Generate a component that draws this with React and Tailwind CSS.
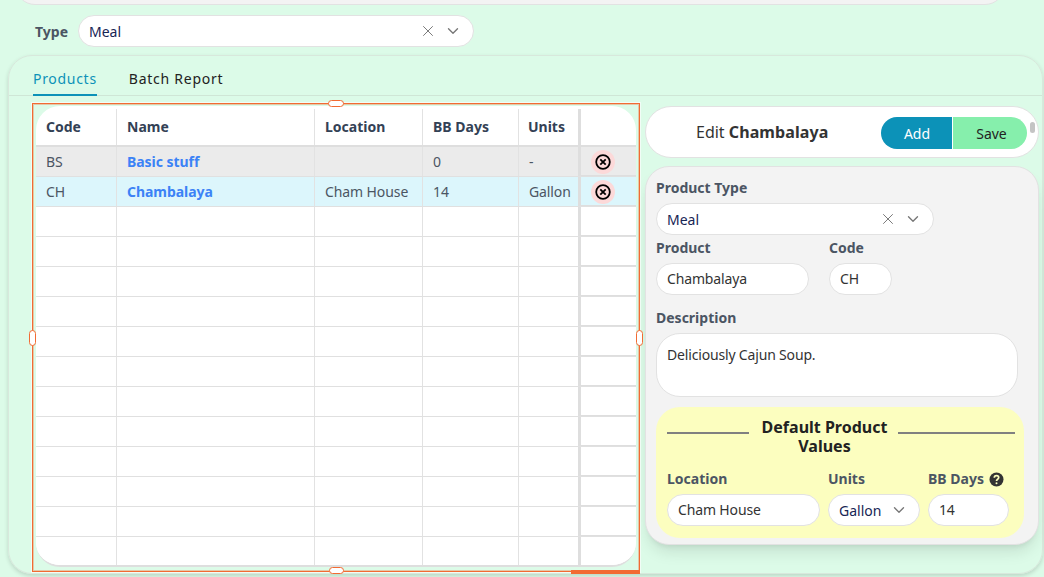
import { X, ChevronDown } from "lucide-react";

const rows = [
  { code: "BS", name: "Basic stuff", location: "", days: "0", units: "-", bg: "bg-[#ebebeb]" },
  { code: "CH", name: "Chambalaya", location: "Cham House", days: "14", units: "Gallon", bg: "bg-[#dcf6fc]" },
  ...Array.from({ length: 12 }, () => ({ code: "", name: "", location: "", days: "", units: "", bg: "bg-white" })),
];

const gridCols = "grid grid-cols-[81px_198px_108px_96px_59px_58px]";

const SelectBox = ({ value, className }) => (
  <div className={`flex items-center rounded-full border border-[#e2e2e2] bg-white pl-[10px] text-sm text-[#172554] ${className}`}>
    <span className="flex-1 pt-[2px]">{value}</span>
    <X className="h-[18px] w-[18px] text-[#777]" strokeWidth={1.3} />
    <ChevronDown className="ml-[7px] mr-[11px] h-[18px] w-[18px] text-[#777]" strokeWidth={1.8} />
  </div>
);

const TextBox = ({ value, className }) => (
  <div className={`flex items-center rounded-full border border-[#e2e2e2] bg-white pl-[10px] text-sm tracking-[-0.15px] text-[#333] ${className}`}>
    {value}
  </div>
);

const Label = ({ children, className = "" }) => (
  <div className={`text-sm font-bold leading-5 text-[#4b5563] ${className}`}>{children}</div>
);

const Handle = ({ className }) => (
  <div className={`absolute rounded-full border border-[#f26b33] bg-white ${className}`} />
);

const RemoveIcon = () => (
  <div className="flex h-6 w-6 items-center justify-center rounded-full bg-[#fcd9d9]">
    <svg width="16" height="16" viewBox="0 0 16 16" fill="none" stroke="#000" strokeWidth="1.8">
      <circle cx="8" cy="8" r="6.8" />
      <path d="M5.3 5.3l5.4 5.4M10.7 5.3l-5.4 5.4" />
    </svg>
  </div>
);

const HelpIcon = () => (
  <svg width="15" height="15" viewBox="0 0 15 15">
    <circle cx="7.5" cy="7.5" r="7" fill="#333" />
    <path d="M5.3 5.8c0-1.3 1-2.1 2.2-2.1s2.2.8 2.2 1.9c0 1.7-2.2 1.6-2.2 3.4" fill="none" stroke="#fcfebf" strokeWidth="1.7" />
    <circle cx="7.5" cy="11.2" r="1" fill="#fcfebf" />
  </svg>
);

const ProductTable = () => (
  <div className="relative h-[469px] w-[608px] shrink-0 border border-[#f26b33] px-[3px] pt-[2px] shadow-[inset_0_0_0_1px_rgba(242,107,51,0.35),0_0_0_1px_rgba(255,255,255,0.6)]">
    <div className="h-[461px] overflow-hidden rounded-[24px] border-b-2 border-[#dedede] bg-white">
      <div className={`${gridCols} h-[41px] border-b-2 border-[#dedede] pt-[3px] text-sm font-bold text-[#334155]`}>
        <div className="flex items-center border-r border-[#e2e2e2] pl-[10px]">Code</div>
        <div className="flex items-center border-r border-[#e2e2e2] pl-[10px]">Name</div>
        <div className="flex items-center border-r border-[#e2e2e2] pl-[10px]">Location</div>
        <div className="flex items-center border-r border-[#e2e2e2] pl-[10px]">BB Days</div>
        <div className="flex items-center pl-[9px]">Units</div>
        <div className="border-l-[3px] border-[#dedede]" />
      </div>
      {rows.map((row, i) => (
        <div key={i} className={`${gridCols} h-[30px] border-b border-[#e0e0e0] text-sm text-[#4b5563] ${row.bg}`}>
          <div className="flex items-center border-r border-[#e2e2e2] pl-[10px]">{row.code}</div>
          <div className="flex items-center border-r border-[#e2e2e2] pl-[10px] font-bold tracking-[-0.05px] text-[#3b82f6]">{row.name}</div>
          <div className="flex items-center border-r border-[#e2e2e2] pl-[10px] tracking-[-0.1px]">{row.location}</div>
          <div className="flex items-center border-r border-[#e2e2e2] pl-[10px]">{row.days}</div>
          <div className="flex items-center pl-[10px] tracking-[-0.1px]">{row.units}</div>
          <div className="flex items-center justify-center border-b border-l-[3px] border-[#dedede] pr-[11px] pt-[2px]">
            {row.name && <RemoveIcon />}
          </div>
        </div>
      ))}
    </div>
    <Handle className="left-[295px] top-[-4px] h-[7px] w-[16px]" />
    <Handle className="bottom-[-3px] left-[296px] h-[7px] w-[15px]" />
    <Handle className="left-[-4px] top-[226px] h-[16px] w-[7px]" />
    <Handle className="right-[-4px] top-[226px] h-[16px] w-[7px]" />
    <div className="absolute bottom-[-3px] right-[-1px] h-[4px] w-[69px] bg-[#f26b33]" />
  </div>
);

const EditPanel = () => (
  <div className="ml-[5px] flex w-[394px] flex-col gap-[8px] pt-[3px]">
    <div className="relative flex h-[52px] items-center rounded-full border border-[#e2e2e2] bg-white pl-[50px]">
      <div className="flex-1 text-base text-[#333]">
        Edit <span className="font-bold tracking-[0.1px]">Chambalaya</span>
      </div>
      <div className="mr-[11px] mt-[2px] flex h-[32px] text-sm">
        <div className="flex w-[71px] items-center justify-center rounded-l-full bg-[#0c92b8] pl-px pt-[2px] text-white">Add</div>
        <div className="ml-px flex w-[74px] items-center justify-center rounded-r-full bg-[#86efac] pl-[3px] pt-[2px] text-[#222]">Save</div>
      </div>
      <div className="absolute right-[3px] top-[15px] h-[11px] w-[5px] rounded-full bg-[#c4c4c4]" />
    </div>

    <div className="h-[379px] rounded-[24px] border border-[#e2e2e2] bg-[#f3f3f3] pl-[10px] pt-[11px] shadow-lg">
      <Label>Product Type</Label>
      <SelectBox value="Meal" className="mt-[5px] h-[32px] w-[278px]" />
      <div className="mt-[3px] flex gap-[20px]">
        <div>
          <Label>Product</Label>
          <TextBox value="Chambalaya" className="mt-[5px] h-[32px] w-[153px]" />
        </div>
        <div>
          <Label>Code</Label>
          <TextBox value="CH" className="mt-[5px] h-[32px] w-[63px]" />
        </div>
      </div>
      <Label className="mt-[13px]">Description</Label>
      <div className="mt-[5px] h-[64px] w-[362px] rounded-[24px] border border-[#e2e2e2] bg-white pl-[10px] pt-[11px] text-sm leading-5 tracking-[-0.17px] text-[#333]">
        Deliciously Cajun Soup.
      </div>

      <div className="mt-[10px] h-[131px] w-[368px] rounded-[24px] bg-[#fcfebf] pl-[11px] pr-[9px] pt-[11px]">
        <div className="flex items-center">
          <div className="mt-[-9px] h-[2px] w-[82px] bg-[#808080]" />
          <div className="w-[149px] pl-[2px] text-center text-base font-bold leading-[19px] text-[#222]">
            Default Product Values
          </div>
          <div className="mt-[-9px] h-[2px] w-[117px] bg-[#808080]" />
        </div>
        <div className="mt-[13px] flex gap-[8px]">
          <div>
            <Label>Location</Label>
            <TextBox value="Cham House" className="mt-[5px] h-[32px] w-[153px]" />
          </div>
          <div>
            <Label>Units</Label>
            <div className="mt-[5px] flex h-[32px] w-[92px] items-center rounded-full border border-[#e2e2e2] bg-white pl-[10px] text-sm text-[#172554]">
              <span className="flex-1 pt-[2px]">Gallon</span>
              <ChevronDown className="mr-[11px] h-[18px] w-[18px] text-[#777]" strokeWidth={1.8} />
            </div>
          </div>
          <div>
            <div className="flex items-center gap-[5px]">
              <Label>BB Days</Label>
              <HelpIcon />
            </div>
            <TextBox value="14" className="mt-[5px] h-[32px] w-[81px]" />
          </div>
        </div>
      </div>
    </div>
  </div>
);

export default function App() {
  return (
    <div className="h-[577px] w-[1044px] overflow-hidden bg-[#dcfbe8] font-['Noto_Sans',sans-serif]">
      {/* Bottom of the panel above */}
      <div className="mx-[15px] mt-[-20px] h-[25px] w-[990px] rounded-b-[20px] border border-[#e2e2e2] bg-[#f3f3f3]" />

      {/* Type filter */}
      <div className="mt-[10px] flex h-[32px] items-center pl-[35px]">
        <span className="w-[43px] pt-px text-sm font-bold text-[#4b5563]">Type</span>
        <SelectBox value="Meal" className="h-[32px] w-[396px]" />
      </div>

      {/* Tabs panel */}
      <div className="ml-[8px] mt-[8px] h-[519px] w-[1035px] rounded-[24px] border border-[#d8e8dc] shadow-[0_2px_4px_rgba(0,0,0,0.15)]">
        <div className="flex h-[40px] gap-[32px] border-b border-[#cfe6d6] pl-[24px]">
          <div className="flex h-[40px] items-center border-b-2 border-[#0c92b8] pt-[8px] text-sm tracking-[0.7px] text-[#0c92b8]">
            Products
          </div>
          <div className="flex h-[40px] items-center pt-[6px] text-sm tracking-[0.75px] text-[#222]">Batch Report</div>
        </div>
        <div className="flex pl-[23px] pt-[7px]">
          <ProductTable />
          <EditPanel />
        </div>
      </div>
    </div>
  );
}
